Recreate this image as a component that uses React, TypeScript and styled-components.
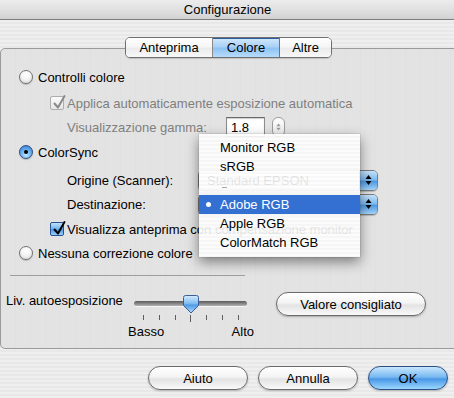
import React from "react";
import styled, { createGlobalStyle, css } from "styled-components";

const GlobalStyle = createGlobalStyle`
  html, body { margin: 0; padding: 0; overflow: hidden; background: #ececec; }
  body { font-family: "Liberation Sans", Arial, sans-serif; font-size: 13px; color: #000; }
  * { box-sizing: border-box; }
`;

const Window = styled.div`
  position: relative;
  width: 454px;
  height: 398px;
  overflow: hidden;
  display: flex;
  flex-direction: column;
  background: repeating-linear-gradient(to bottom, #efefef 0px, #efefef 2px, #e8e8e8 2px, #e8e8e8 4px);
`;

const TitleBar = styled.div`
  height: 20px;
  flex: none;
  display: flex;
  align-items: center;
  justify-content: center;
  background: linear-gradient(to bottom, #ececec 0%, #dedede 60%, #d2d2d2 100%);
  border-bottom: 1px solid #7d7d7d;
  font-size: 13px;
  padding-left: 1px;
`;

const TabStrip = styled.div`
  position: relative;
  z-index: 2;
  margin-top: 17px;
  margin-left: 125px;
  display: flex;
  height: 21px;
  width: 207px;
  border: 1px solid #6f6f6f;
  border-radius: 5px;
  overflow: hidden;
  box-shadow: 0 1px 1px rgba(0, 0, 0, 0.15);
`;

const Tab = styled.div<{ $w: number; $active?: boolean; $last?: boolean }>`
  width: ${(p) => p.$w}px;
  flex: none;
  display: flex;
  align-items: center;
  justify-content: center;
  font-size: 13px;
  border-right: ${(p) => (p.$last ? "none" : "1px solid #8a8a8a")};
  background: linear-gradient(to bottom, #ffffff 0%, #f6f6f6 45%, #ebebeb 55%, #f8f8f8 100%);
  ${(p) =>
    p.$active &&
    css`
      background: linear-gradient(to bottom, #d3e8fb 0%, #a9d1f6 45%, #8fc3f3 55%, #b7dcfb 100%);
      border-right-color: #5577aa;
      box-shadow: inset 0 1px 0 #2d5d9a;
    `}
`;

const Panel = styled.div`
  position: relative;
  z-index: 1;
  margin-top: -10px;
  margin-right: -5px;
  height: 301px;
  flex: none;
  border: 1px solid #9a9a9a;
  border-radius: 5px;
  background: repeating-linear-gradient(to right, #e3e3e3 0px, #e3e3e3 14px, #e0e0e0 14px, #e0e0e0 15px);
  padding: 16px 0 0 5px;
  display: flex;
  flex-direction: column;
`;

const Row = styled.div<{ $mt?: number; $indent?: number }>`
  height: 24px;
  margin-top: ${(p) => p.$mt ?? 0}px;
  margin-left: ${(p) => p.$indent ?? 0}px;
  display: flex;
  align-items: center;
  white-space: nowrap;
`;

const Label = styled.span<{ $disabled?: boolean; $w?: number }>`
  color: ${(p) => (p.$disabled ? "#7f7f7f" : "#000")};
  ${(p) => p.$w && `width: ${p.$w}px; flex: none;`}
`;

const RadioCircle = styled.span<{ $on?: boolean }>`
  width: 14px;
  height: 14px;
  flex: none;
  border-radius: 50%;
  border: 1px solid #727272;
  margin-right: 5px;
  display: flex;
  align-items: center;
  justify-content: center;
  background: radial-gradient(circle at 50% 30%, #ffffff 0%, #f4f4f4 45%, #d6d6d6 100%);
  box-shadow: 0 1px 1px rgba(0, 0, 0, 0.2);
  ${(p) =>
    p.$on &&
    css`
      border-color: #2b4f84;
      background: radial-gradient(circle at 50% 75%, #c4e6ff 0%, #6eb2ef 45%, #2f78cf 100%);
      &::after {
        content: "";
        width: 4px;
        height: 4px;
        border-radius: 50%;
        background: #000;
      }
    `}
`;

const CheckBox = styled.span<{ $on?: boolean; $disabled?: boolean }>`
  position: relative;
  width: 14px;
  height: 14px;
  flex: none;
  margin-right: 3px;
  border-radius: 2px;
  border: 1px solid ${(p) => (p.$disabled ? "#adadad" : "#28528f")};
  background: ${(p) =>
    p.$disabled
      ? "linear-gradient(to bottom, #fafafa, #e6e6e6)"
      : "linear-gradient(to bottom, #bfe0fb 0%, #71b3ee 50%, #4c98e5 55%, #9ad2fb 100%)"};
  svg { position: absolute; left: 1px; top: -3px; }
`;

const Field = styled.div`
  width: 39px;
  height: 20px;
  flex: none;
  background: #fff;
  border: 1px solid #8c8c8c;
  border-top-color: #6a6a6a;
  box-shadow: inset 0 1px 1px rgba(0, 0, 0, 0.2);
  padding: 2px 0 0 4px;
  font-size: 13px;
`;

const Stepper = styled.div`
  width: 13px;
  height: 20px;
  flex: none;
  margin-left: 7px;
  border: 1px solid #9c9c9c;
  border-radius: 6px;
  background: linear-gradient(to bottom, #fdfdfd, #e9e9e9);
  display: flex;
  align-items: center;
  justify-content: center;
`;

const Popup = styled.div`
  width: 180px;
  height: 21px;
  flex: none;
  display: flex;
  border: 1px solid #7c7c7c;
  border-radius: 5px;
  overflow: hidden;
  box-shadow: 0 1px 1px rgba(0, 0, 0, 0.2);
`;

const PopupBody = styled.div`
  flex: 1;
  padding-left: 8px;
  display: flex;
  align-items: center;
  background: linear-gradient(to bottom, #ffffff 0%, #f3f3f3 50%, #e8e8e8 55%, #f7f7f7 100%);
`;

const PopupCap = styled.div`
  width: 18px;
  flex: none;
  border-left: 1px solid #3d68a6;
  background: linear-gradient(to bottom, #c6e3fb 0%, #7bb8ef 48%, #4f98e3 55%, #a2d6fc 100%);
  display: flex;
  align-items: center;
  justify-content: center;
`;

const Separator = styled.div`
  margin: 10px 0 0 4px;
  width: 235px;
  height: 1px;
  flex: none;
  background: #9f9f9f;
`;

const SliderRow = styled.div`
  margin-top: 16px;
  display: flex;
  align-items: flex-start;
`;

const SliderLabel = styled.span`
  width: 120px;
  flex: none;
  margin-top: 1px;
  line-height: 16px;
`;

const SliderBlock = styled.div`
  width: 128px;
  flex: none;
  display: flex;
  flex-direction: column;
`;

const TrackArea = styled.div`
  position: relative;
  height: 22px;
  margin: 0 7px 0 8px;
  display: flex;
  align-items: center;
`;

const Track = styled.div`
  flex: 1;
  height: 5px;
  border-radius: 3px;
  background: linear-gradient(to bottom, #5a5a5a, #8d8d8d 60%, #b4b4b4);
  box-shadow: 0 1px 0 rgba(255, 255, 255, 0.6);
`;

const Thumb = styled.svg`
  position: absolute;
  top: 3px;
`;

const Ticks = styled.div`
  display: flex;
  justify-content: space-between;
  margin: 1px 15px 0 17px;
  height: 8px;
`;

const Tick = styled.span<{ $long?: boolean }>`
  width: 1px;
  height: ${(p) => (p.$long ? 7 : 5)}px;
  background: #5e5e5e;
`;

const TickLabels = styled.div`
  display: flex;
  justify-content: space-between;
  margin: 1px 0 0 2px;
  font-size: 13px;
  line-height: 16px;
`;

const AquaButton = styled.div<{ $w: number; $default?: boolean }>`
  width: ${(p) => p.$w}px;
  height: 24px;
  flex: none;
  border-radius: 12px;
  border: 1px solid #6b6b6b;
  display: flex;
  align-items: center;
  justify-content: center;
  font-size: 13px;
  background: linear-gradient(to bottom, #ffffff 0%, #f4f4f4 45%, #e3e3e3 55%, #f9f9f9 100%);
  box-shadow: 0 1px 2px rgba(0, 0, 0, 0.25);
  ${(p) =>
    p.$default &&
    css`
      border-color: #2b4f84;
      background: linear-gradient(to bottom, #c9e6fd 0%, #79b9f1 45%, #4a98e6 55%, #9bd7ff 100%);
    `}
`;

const ValueButton = styled(AquaButton)`
  margin-left: 22px;
`;

const Footer = styled.div`
  margin-top: 17px;
  padding-right: 6px;
  display: flex;
  justify-content: flex-end;
  gap: 10px;
`;

const Menu = styled.div`
  position: absolute;
  left: 199px;
  top: 134px;
  width: 161px;
  height: 123px;
  z-index: 5;
  padding-top: 4px;
  background: repeating-linear-gradient(to bottom, rgba(255,255,255,0.9) 0px, rgba(255,255,255,0.9) 2px, rgba(248,248,248,0.9) 2px, rgba(248,248,248,0.9) 4px);
  box-shadow: 0 5px 12px rgba(0, 0, 0, 0.45), 0 0 1px rgba(0, 0, 0, 0.4);
`;

const MenuItem = styled.div<{ $selected?: boolean }>`
  position: relative;
  height: 19px;
  padding-left: 21px;
  display: flex;
  align-items: center;
  font-size: 13px;
  color: ${(p) => (p.$selected ? "#fff" : "#000")};
  background: ${(p) => (p.$selected ? "#3370d1" : "transparent")};
`;

const Bullet = styled.span`
  position: absolute;
  left: 7px;
  top: 7px;
  width: 5px;
  height: 5px;
  border-radius: 50%;
  background: #fff;
`;

const MenuDash = styled.span`
  width: 5px;
  height: 1px;
  margin-left: 2px;
  margin-top: 4px;
  background: #a8a8a8;
`;

const Check = ({ color }: { color: string }) => (
  <svg width="14" height="16" viewBox="0 0 14 16">
    <path d="M2.5 9.5 L6 13.5 L12.5 2" fill="none" stroke={color} strokeWidth="2" strokeLinecap="round" strokeLinejoin="round" />
  </svg>
);

const Arrows = ({ color, w = 7 }: { color: string; w?: number }) => (
  <svg width={w} height="14" viewBox="0 0 7 14">
    <path d="M3.5 2 L6.5 6 H0.5 Z" fill={color} />
    <path d="M3.5 12 L6.5 8 H0.5 Z" fill={color} />
  </svg>
);

const Radio = ({ on, children }: { on?: boolean; children: React.ReactNode }) => (
  <>
    <RadioCircle $on={on} />
    <Label>{children}</Label>
  </>
);

export default function App() {
  return (
    <>
      <GlobalStyle />
      <Window>
        <TitleBar>Configurazione</TitleBar>
        <TabStrip>
          <Tab $w={87}>Anteprima</Tab>
          <Tab $w={67} $active>Colore</Tab>
          <Tab $w={51} $last>Altre</Tab>
        </TabStrip>
        <Panel>
          <Row $indent={13}>
            <Radio>Controlli colore</Radio>
          </Row>
          <Row $mt={2} $indent={44}>
            <CheckBox $on $disabled>
              <Check color="#8a8a8a" />
            </CheckBox>
            <Label $disabled>Applica automaticamente esposizione automatica</Label>
          </Row>
          <Row $indent={61}>
            <Label $disabled $w={159}>Visualizzazione gamma:</Label>
            <Field>1.8</Field>
            <Stepper>
              <Arrows color="#9a9a9a" w={5} />
            </Stepper>
          </Row>
          <Row $mt={1} $indent={13}>
            <Radio on>ColorSync</Radio>
          </Row>
          <Row $mt={4} $indent={61}>
            <Label $w={131}>Origine (Scanner):</Label>
            <Popup>
              <PopupBody>Standard EPSON</PopupBody>
              <PopupCap>
                <Arrows color="#000" />
              </PopupCap>
            </Popup>
          </Row>
          <Row $indent={61}>
            <Label $w={131}>Destinazione:</Label>
            <Popup>
              <PopupBody />
              <PopupCap>
                <Arrows color="#000" />
              </PopupCap>
            </Popup>
          </Row>
          <Row $mt={1} $indent={44}>
            <CheckBox $on>
              <Check color="#000" />
            </CheckBox>
            <Label>Visualizza anteprima con compensazione monitor</Label>
          </Row>
          <Row $indent={13}>
            <Radio>Nessuna correzione colore</Radio>
          </Row>
          <Separator />
          <SliderRow>
            <SliderLabel>Liv. autoesposizione</SliderLabel>
            <SliderBlock>
              <TrackArea>
                <Track />
                <Thumb width="16" height="19" viewBox="0 0 16 19" style={{ left: 49 }}>
                  <defs>
                    <linearGradient id="thumbg" x1="0" y1="0" x2="0" y2="1">
                      <stop offset="0" stopColor="#d6ecfd" />
                      <stop offset="0.45" stopColor="#7fbcf1" />
                      <stop offset="0.55" stopColor="#4f9be6" />
                      <stop offset="1" stopColor="#b4defd" />
                    </linearGradient>
                  </defs>
                  <path
                    d="M2.5 0.5 H13.5 Q15.5 0.5 15.5 2.5 V10.5 L8 18 L0.5 10.5 V2.5 Q0.5 0.5 2.5 0.5 Z"
                    fill="url(#thumbg)"
                    stroke="#3b5f93"
                  />
                </Thumb>
              </TrackArea>
              <Ticks>
                {[0, 1, 2, 3, 4, 5, 6].map((i) => (
                  <Tick key={i} $long={i === 3} />
                ))}
              </Ticks>
              <TickLabels>
                <span>Basso</span>
                <span>Alto</span>
              </TickLabels>
            </SliderBlock>
            <ValueButton $w={150}>Valore consigliato</ValueButton>
          </SliderRow>
        </Panel>
        <Footer>
          <AquaButton $w={100}>Aiuto</AquaButton>
          <AquaButton $w={100}>Annulla</AquaButton>
          <AquaButton $w={80} $default>OK</AquaButton>
        </Footer>
        <Menu>
          <MenuItem>Monitor RGB</MenuItem>
          <MenuItem>sRGB</MenuItem>
          <MenuItem>
            <MenuDash />
          </MenuItem>
          <MenuItem $selected>
            <Bullet />
            Adobe RGB
          </MenuItem>
          <MenuItem>Apple RGB</MenuItem>
          <MenuItem>ColorMatch RGB</MenuItem>
        </Menu>
      </Window>
    </>
  );
}
